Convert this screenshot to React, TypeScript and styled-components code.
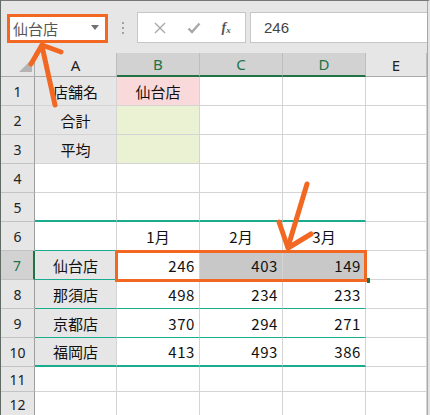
import React from 'react';
import styled, { createGlobalStyle } from 'styled-components';

const GlobalStyle = createGlobalStyle`
  html, body {
    margin: 0;
    padding: 0;
    background: #ffffff;
  }
`;

const ORANGE = '#f26822';
const TEAL = '#1bab8f';
const GREEN = '#217346';

const Window = styled.div`
  position: relative;
  width: 430px;
  height: 415px;
  overflow: hidden;
  box-sizing: border-box;
  background: #e6e6e6;
  border-top: 1px solid #777;
  border-left: 1px solid #5f6b63;
  border-right: 2px solid #e3e3e3;
  font-family: "Noto Sans CJK JP", "Liberation Sans", sans-serif;
`;

const Content = styled.div`
  border-right: 1px solid #a9a9a9;
  height: 100%;
  box-sizing: border-box;
`;

const Toolbar = styled.div`
  display: flex;
  align-items: flex-start;
  height: 52px;
`;

const NameBox = styled.div`
  margin: 13px 0 0 6px;
  width: 101px;
  height: 29px;
  box-sizing: border-box;
  border: 3px solid ${ORANGE};
  background: #fff;
  display: flex;
  align-items: center;
  justify-content: space-between;
  padding: 0 6px 0 3px;
  font-size: 15px;
  color: #555;
`;

const Caret = styled.span`
  width: 0;
  height: 0;
  border-left: 4px solid transparent;
  border-right: 4px solid transparent;
  border-top: 5px solid #707070;
  margin-top: -3px;
`;

const Grip = styled.div`
  margin: 21px 0 0 14px;
  display: flex;
  flex-direction: column;
  gap: 3px;

  span {
    width: 2px;
    height: 2px;
    background: #a0a0a0;
  }
`;

const ButtonGroup = styled.div`
  margin: 11px 0 0 13px;
  width: 109px;
  height: 31px;
  box-sizing: border-box;
  border: 1px solid #c6c6c6;
  background: #fff;
  display: flex;
  align-items: center;
  justify-content: space-around;
  padding: 0 4px 0 6px;
`;

const Fx = styled.span`
  font-family: "Liberation Serif", serif;
  font-style: italic;
  font-weight: bold;
  font-size: 14px;
  color: #555;

  sub {
    font-size: 9px;
    vertical-align: -1px;
  }
`;

const FormulaInput = styled.div`
  margin: 11px 0 0 4px;
  flex: 1;
  height: 31px;
  box-sizing: border-box;
  border: 1px solid #c6c6c6;
  border-right: none;
  background: #fff;
  display: flex;
  align-items: center;
  padding-left: 13px;
  font-family: "Liberation Sans", sans-serif;
  font-size: 15px;
  color: #444;
`;

const Sheet = styled.div`
  display: grid;
  grid-template-columns: 34px 82px 83px 83px 83px 61px;
  grid-template-rows: 24px repeat(10, 29px) 25px 25px;
  background: #fff;
`;

const Corner = styled.div`
  position: relative;
  background: #e6e6e6;
  box-sizing: border-box;
  border-right: 1px solid #ababab;
  border-bottom: 1px solid #ababab;

  &::after {
    content: "";
    position: absolute;
    right: 2px;
    bottom: 4px;
    width: 0;
    height: 0;
    border-left: 13px solid transparent;
    border-bottom: 13px solid #b4b4b4;
  }
`;

const ColHead = styled.div<{ $active?: boolean }>`
  box-sizing: border-box;
  display: flex;
  align-items: center;
  justify-content: center;
  font-family: "Noto Sans", "Liberation Sans", sans-serif;
  font-size: 15px;
  background: ${(p) => (p.$active ? '#d2d2d2' : '#e6e6e6')};
  color: ${(p) => (p.$active ? GREEN : '#222')};
  border-right: 1px solid #bdbdbd;
  border-bottom: ${(p) => (p.$active ? `2px solid ${GREEN}` : '1px solid #ababab')};
`;

const RowHead = styled.div<{ $active?: boolean }>`
  box-sizing: border-box;
  display: flex;
  align-items: center;
  justify-content: center;
  font-family: "Noto Sans", "Liberation Sans", sans-serif;
  font-size: 14px;
  background: ${(p) => (p.$active ? '#d2d2d2' : '#e6e6e6')};
  color: ${(p) => (p.$active ? GREEN : '#222')};
  border-bottom: 1px solid #c3c3c3;
  border-right: ${(p) => (p.$active ? `2px solid ${GREEN}` : '1px solid #9e9e9e')};
`;

const Cell = styled.div<{ $fill?: string; $align?: string; $line?: string; $num?: boolean }>`
  box-sizing: border-box;
  display: flex;
  align-items: center;
  justify-content: ${(p) => p.$align || 'center'};
  padding: 0 4px;
  font-size: 15px;
  color: #111;
  letter-spacing: ${(p) => (p.$num ? '0.6px' : '0')};
  background: ${(p) => p.$fill || '#fff'};
  border-right: 1px solid #d4d4d4;
  border-bottom: ${(p) => p.$line || '1px solid #d4d4d4'};
`;

const Selection = styled.div`
  position: absolute;
  left: 114px;
  top: 249px;
  width: 252px;
  height: 32px;
  box-sizing: border-box;
  border: 3px solid ${ORANGE};
  pointer-events: none;
`;

const FillHandle = styled.div`
  position: absolute;
  left: 366px;
  top: 277px;
  width: 3px;
  height: 5px;
  background: ${GREEN};
`;

const Arrows = styled.svg`
  position: absolute;
  left: -1px;
  top: -1px;
  pointer-events: none;
`;

const rows: string[][] = [
  ['店舗名', '仙台店', '', '', ''],
  ['合計', '', '', '', ''],
  ['平均', '', '', '', ''],
  ['', '', '', '', ''],
  ['', '', '', '', ''],
  ['', '1月', '2月', '3月', ''],
  ['仙台店', '246', '403', '149', ''],
  ['那須店', '498', '234', '233', ''],
  ['京都店', '370', '294', '271', ''],
  ['福岡店', '413', '493', '386', ''],
  ['', '', '', '', ''],
  ['', '', '', '', ''],
];

const fillFor = (r: number, c: number): string | undefined => {
  if (c === 0 && (r <= 3 || (r >= 7 && r <= 10))) return '#e7e6e6';
  if (r === 1 && c === 1) return '#f9d9da';
  if ((r === 2 || r === 3) && c === 1) return '#ebf2d3';
  if (r === 7 && (c === 2 || c === 3)) return '#c8c8c8';
  return undefined;
};

const lineFor = (r: number, c: number): string | undefined => {
  if (c > 3) return undefined;
  if (r === 5 || r === 10) return `2px solid ${TEAL}`;
  if (r >= 6 && r <= 9) return `1px solid ${TEAL}`;
  return undefined;
};

export default function App() {
  const cols = ['A', 'B', 'C', 'D', 'E'];
  return (
    <>
      <GlobalStyle />
      <Window>
        <Content>
          <Toolbar>
            <NameBox>
              仙台店
              <Caret />
            </NameBox>
            <Grip>
              <span />
              <span />
              <span />
            </Grip>
            <ButtonGroup>
              <svg width="12" height="12" viewBox="0 0 12 12">
                <path d="M1 1 L11 11 M11 1 L1 11" stroke="#a8a8a8" strokeWidth="1.4" fill="none" />
              </svg>
              <svg width="14" height="12" viewBox="0 0 14 12">
                <path d="M1.5 6.5 L5 10 L12.5 1.5" stroke="#a8a8a8" strokeWidth="2.4" fill="none" />
              </svg>
              <Fx>
                f<sub>x</sub>
              </Fx>
            </ButtonGroup>
            <FormulaInput>246</FormulaInput>
          </Toolbar>
          <Sheet>
            <Corner />
            {cols.map((c, i) => (
              <ColHead key={c} $active={i >= 1 && i <= 3}>
                {c}
              </ColHead>
            ))}
            {rows.map((row, ri) => {
              const r = ri + 1;
              return (
                <React.Fragment key={r}>
                  <RowHead $active={r === 7}>{r}</RowHead>
                  {row.map((v, c) => {
                    const isNum = /^\d+$/.test(v);
                    return (
                      <Cell
                        key={c}
                        $fill={fillFor(r, c)}
                        $line={lineFor(r, c)}
                        $align={isNum ? 'flex-end' : 'center'}
                        $num={isNum}
                      >
                        {v}
                      </Cell>
                    );
                  })}
                </React.Fragment>
              );
            })}
          </Sheet>
        </Content>
        <Selection />
        <FillHandle />
        <Arrows width="430" height="415" viewBox="0 0 430 415">
          <g stroke={ORANGE} strokeWidth="5" strokeLinecap="round" strokeLinejoin="round" fill="none">
            <path d="M55 105 L42 46" />
            <path d="M31 64 L42 45 L61 52" />
            <path d="M307 184 L288 247" />
            <path d="M279 222 L288 248 L311 234" />
          </g>
        </Arrows>
      </Window>
    </>
  );
}
